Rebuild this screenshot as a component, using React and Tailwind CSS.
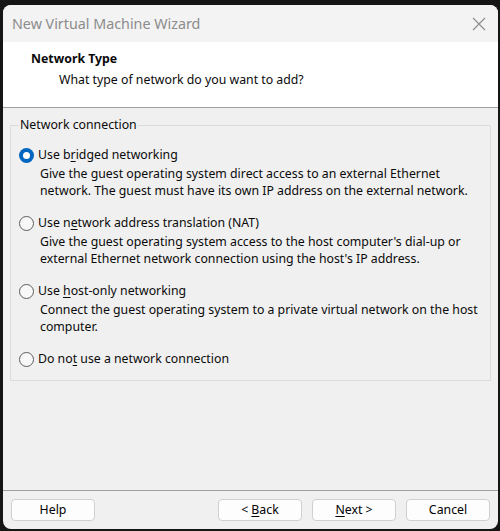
import React from "react";

const font = { fontFamily: '"Noto Sans", "Liberation Sans", sans-serif' };

function Radio({ checked }) {
  return checked ? (
    <span className="w-[15px] h-[15px] rounded-full bg-[#0067c0] flex items-center justify-center shrink-0">
      <span className="w-[7px] h-[7px] rounded-full bg-white" />
    </span>
  ) : (
    <span className="w-[15px] h-[15px] rounded-full border border-[#5c5c5c] bg-[#f8f8f8] shrink-0" />
  );
}

function Option({ checked, before, hot, after, desc }) {
  return (
    <div>
      <div className="flex items-center gap-[4px] h-[17px]">
        <Radio checked={checked} />
        <span>
          {before}
          <span className="underline underline-offset-2">{hot}</span>
          {after}
        </span>
      </div>
      {desc && (
        <div className="pl-[21px] mt-[1px] leading-[17px]">
          {desc.map((l, i) => (
            <div key={i}>{l}</div>
          ))}
        </div>
      )}
    </div>
  );
}

function Btn({ children }) {
  return (
    <button className="w-[84px] h-[22px] rounded-[4px] border border-[#d0d0d0] bg-[#fdfdfd] text-[12.3px] text-black flex items-center justify-center">
      {children}
    </button>
  );
}

export default function App() {
  return (
    <div className="w-[500px] h-[531px] bg-[#151515] flex pt-[5px] pl-[3px]" style={font}>
      <div className="w-[495px] h-[524px] bg-[#f0f0f0] rounded-lg overflow-hidden flex flex-col text-[12.3px] text-[#0a0a0a]">
        <div className="h-[37px] bg-[#f3f3f3] flex items-center justify-between pl-[9px] pr-[12px]">
          <span className="text-[14.3px] text-[#8c8c8c]">New Virtual Machine Wizard</span>
          <svg width="14" height="14" viewBox="0 0 14 14" stroke="#8c8c8c" strokeWidth="1.1">
            <path d="M1 1 L13 13 M13 1 L1 13" />
          </svg>
        </div>
        <div className="h-[66px] bg-white border-b border-[#a0a0a0] pl-[28px] pt-[8px]">
          <div className="font-bold leading-[18px]">Network Type</div>
          <div className="pl-[28px] leading-[18px] mt-[3px]">What type of network do you want to add?</div>
        </div>
        <div className="flex-1 px-[7px] pt-[9px]">
          <fieldset className="border border-[#dcdcdc] h-[264px] px-[8px]">
            <legend className="ml-0 px-[1px] leading-[16px]">Network connection</legend>
            <div className="flex flex-col gap-[16px] pt-[14px]">
              <Option
                checked
                before="Use b"
                hot="r"
                after="idged networking"
                desc={[
                  "Give the guest operating system direct access to an external Ethernet",
                  "network. The guest must have its own IP address on the external network.",
                ]}
              />
              <Option
                before="Use n"
                hot="e"
                after="twork address translation (NAT)"
                desc={[
                  "Give the guest operating system access to the host computer's dial-up or",
                  "external Ethernet network connection using the host's IP address.",
                ]}
              />
              <Option
                before="Use "
                hot="h"
                after="ost-only networking"
                desc={[
                  "Connect the guest operating system to a private virtual network on the host",
                  "computer.",
                ]}
              />
              <Option before="Do no" hot="t" after=" use a network connection" />
            </div>
          </fieldset>
        </div>
        <div className="border-t border-[#a0a0a0] h-[39px] flex items-center px-[8px]">
          <Btn>Help</Btn>
          <div className="flex-1" />
          <div className="flex gap-[10px]">
            <Btn>
              &lt; <span className="underline underline-offset-2 ml-[3px]">B</span>ack
            </Btn>
            <Btn>
              <span className="underline underline-offset-2">N</span>ext &gt;
            </Btn>
            <Btn>Cancel</Btn>
          </div>
        </div>
      </div>
    </div>
  );
}
